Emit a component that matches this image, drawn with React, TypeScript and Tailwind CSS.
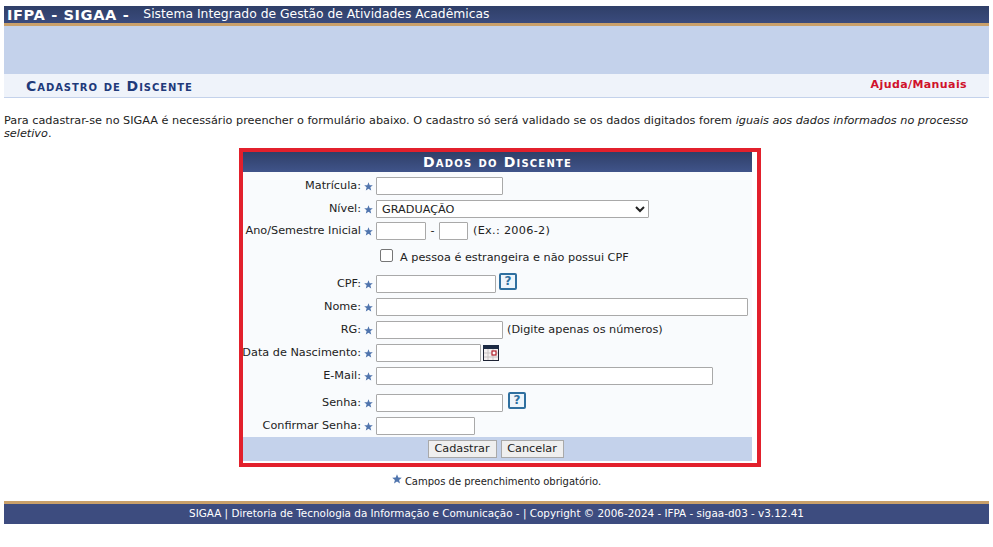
const input = 'h-[18px] border border-[#a9a9a9] bg-white rounded-[1px]';

function Star({ className = 'w-[9px] h-[9px]' }: { className?: string }) {
  return (
    <svg viewBox="0 0 10 10" className={className}>
      <path d="M5 0.3 L6.3 3.5 L9.8 3.7 L7.1 5.9 L8 9.5 L5 7.5 L2 9.5 L2.9 5.9 L0.2 3.7 L3.7 3.5 Z" fill="#4f74ad" />
    </svg>
  );
}

function HelpIcon() {
  return (
    <span className="flex h-[17px] w-[18px] items-center justify-center rounded-[2px] border-2 border-[#2f6f9f] bg-[#eef5fb] text-[12px] font-bold leading-none text-[#2f6f9f]">
      ?
    </span>
  );
}

function CalendarIcon() {
  return (
    <svg viewBox="0 0 16 16" className="h-[16px] w-[16px]">
      <rect x="0.5" y="0.5" width="15" height="15" fill="#f4f0f0" stroke="#1c2233" />
      <rect x="0" y="0" width="16" height="4" fill="#1c2a44" />
      <path d="M5 4v11M10 4v11M1 8h14M1 12h14" stroke="#c9c4c4" strokeWidth="1" />
      <rect x="9" y="6" width="4" height="4" fill="#fff" stroke="#b3202c" strokeWidth="1.2" />
    </svg>
  );
}

// linha do formulario: label + estrela + campo
function Row({ label, h, children }: { label: string; h: string; children: React.ReactNode }) {
  return (
    <div className={`flex items-center ${h}`}>
      <span className="flex w-[118px] justify-end whitespace-nowrap text-right">{label}</span>
      <span className="flex w-[15px] justify-start pl-[3px]">
        <Star />
      </span>
      <div className="flex items-center">{children}</div>
    </div>
  );
}

export default function App() {
  return (
    <div className="h-[547px] w-[993px] overflow-hidden bg-white pt-[6px] text-[11.26px] text-[#222] [font-family:'DejaVu_Sans',Verdana,sans-serif]">
      {/* Cabecalho */}
      <div className="mx-[4px]">
        <div className="flex h-[17px] items-center bg-gradient-to-b from-[#2f3f68] to-[#3a4b7d] pl-[3px] text-white">
          <span className="text-[14.6px] font-bold tracking-[0.6px]">IFPA - SIGAA -</span>
          <span className="ml-[14px] text-[12.35px]">Sistema Integrado de Gestão de Atividades Acadêmicas</span>
        </div>
        <div className="h-[3px] bg-[#c9a06a]"></div>
        <div className="h-[48px] bg-[#c4d2eb]"></div>
        <div className="flex h-[24px] items-center justify-between border-b border-[#c4d2eb] bg-[#eff3fa] pl-[22px] pr-[22px]">
          <span className="mt-[1px] text-[14px] font-bold tracking-[0.95px] text-[#1f3a7a] [font-variant:small-caps]">Cadastro de Discente</span>
          <span className="text-[11px] font-bold tracking-[0.4px] text-[#d0112b]">Ajuda/Manuais</span>
        </div>
      </div>

      {/* Aviso */}
      <p className="mx-[4px] mt-[16px] leading-[13px]">
        Para cadastrar-se no SIGAA é necessário preencher o formulário abaixo. O cadastro só será validado se os dados digitados forem{' '}
        <i>iguais aos dados informados no processo seletivo</i>.
      </p>

      {/* Formulario */}
      <div className="ml-[239px] mt-[8px] w-[522px] border-4 border-[#e2202c] pb-[2px] pr-[5px]">
        <div className="flex h-[20px] items-center justify-center bg-gradient-to-b from-[#2f3f68] to-[#40548a] text-[14px] font-bold tracking-[1.2px] text-white [font-variant:small-caps]">
          Dados do Discente
        </div>
        <div className="bg-[#f9fbfd] pt-[3px]">
          <Row label="Matrícula:" h="h-[23px] pb-[1px]">
            <div className={`${input} w-[127px]`}></div>
          </Row>
          <Row label="Nível:" h="h-[22px]">
            <select className={`${input} w-[273px] pl-[1px] text-[11.26px] text-[#222]`}>
              <option>GRADUAÇÃO</option>
            </select>
          </Row>
          <Row label="Ano/Semestre Inicial" h="h-[23px] pb-[1px]">
            <div className={`${input} w-[50px]`}></div>
            <span className="w-[13px] text-center">-</span>
            <div className={`${input} w-[29px]`}></div>
            <span className="ml-[5px] tracking-[0.3px]">(Ex.: 2006-2)</span>
          </Row>
          <div className="flex h-[30px] items-center pl-[137px]">
            <span className="-mt-[5px] h-[13px] w-[13px] rounded-[2px] border border-[#767676] bg-white"></span>
            <span className="ml-[7px] mt-[1px]">A pessoa é estrangeira e não possui CPF</span>
          </div>
          <Row label="CPF:" h="h-[23px] pb-[1px]">
            <div className={`${input} w-[120px]`}></div>
            <span className="-mt-[6px] ml-[3px]">
              <HelpIcon />
            </span>
          </Row>
          <Row label="Nome:" h="h-[23px] pb-[1px]">
            <div className={`${input} w-[372px]`}></div>
          </Row>
          <Row label="RG:" h="h-[23px] pb-[1px]">
            <div className={`${input} w-[127px]`}></div>
            <span className="ml-[4px]">(Digite apenas os números)</span>
          </Row>
          <Row label="Data de Nascimento:" h="h-[23px] pb-[1px]">
            <div className={`${input} w-[105px]`}></div>
            <span className="ml-[2px]">
              <CalendarIcon />
            </span>
          </Row>
          <Row label="E-Mail:" h="h-[27px] pb-[5px]">
            <div className={`${input} w-[337px]`}></div>
          </Row>
          <Row label="Senha:" h="h-[23px] pb-[1px]">
            <div className={`${input} w-[127px]`}></div>
            <span className="-mt-[6px] ml-[5px]">
              <HelpIcon />
            </span>
          </Row>
          <Row label="Confirmar Senha:" h="h-[22px]">
            <div className={`${input} w-[99px]`}></div>
          </Row>
          <div className="flex h-[24px] items-center justify-center gap-[4px] bg-[#c4d2eb] pr-[4px]">
            <button className="h-[18px] w-[69px] border border-[#a9a9a9] bg-[#efefef] text-[11.26px] leading-none text-[#222]">Cadastrar</button>
            <button className="h-[18px] w-[63px] border border-[#a9a9a9] bg-[#efefef] text-[11.26px] leading-none text-[#222]">Cancelar</button>
          </div>
        </div>
      </div>

      {/* Legenda */}
      <div className="mt-[7px] flex items-center justify-center text-[10px]">
        <Star className="-mt-[5px] mr-[3px] h-[10px] w-[10px]" />
        <span>Campos de preenchimento obrigatório.</span>
      </div>

      {/* Rodape */}
      <div className="mx-[4px] mt-[12px]">
        <div className="h-[3px] bg-[#c9a06a]"></div>
        <div className="flex h-[20px] items-center justify-center bg-[#3d4c7f] text-[10.4px] text-white">
          SIGAA | Diretoria de Tecnologia da Informação e Comunicação - | Copyright © 2006-2024 - IFPA - sigaa-d03 - v3.12.41
        </div>
      </div>
    </div>
  );
}
